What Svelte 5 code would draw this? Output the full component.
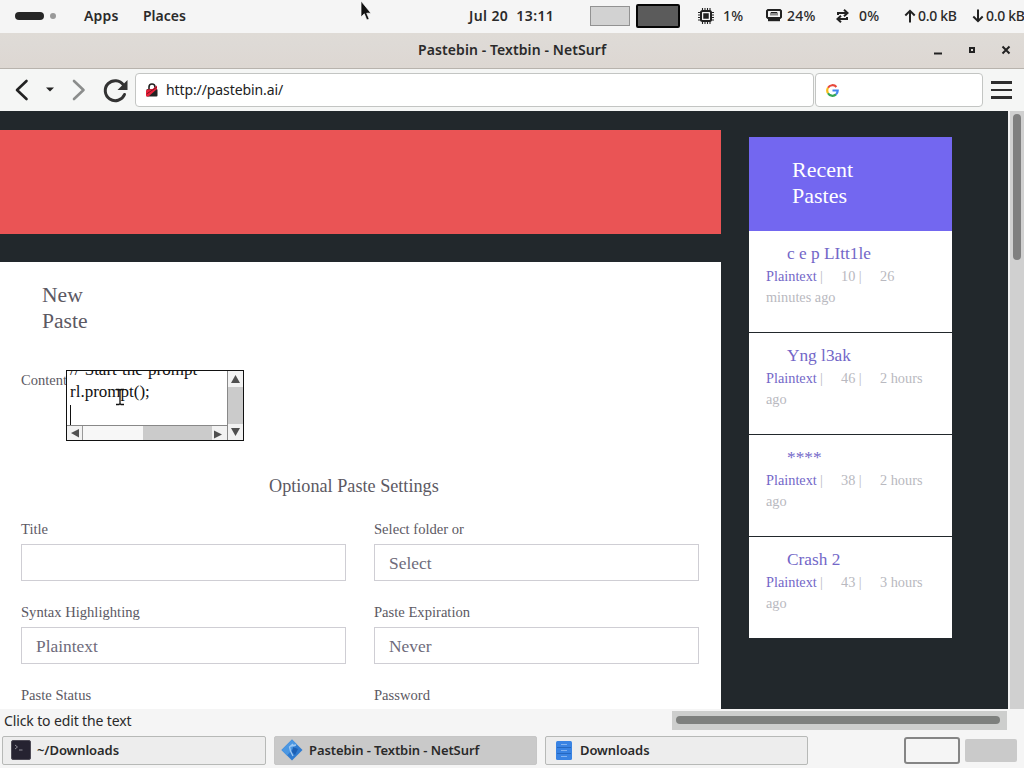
<script>
	const pastes = [
		{ title: 'c e p LItt1le', views: 10, age: '26', rest: 'minutes ago' },
		{ title: 'Yng l3ak', views: 46, age: '2 hours', rest: 'ago' },
		{ title: '****', views: 38, age: '2 hours', rest: 'ago' },
		{ title: 'Crash 2', views: 43, age: '3 hours', rest: 'ago' }
	];

	const fields = [
		{ label: 'Title', value: '' },
		{ label: 'Select folder or', value: 'Select' },
		{ label: 'Syntax Highlighting', value: 'Plaintext' },
		{ label: 'Paste Expiration', value: 'Never' },
		{ label: 'Paste Status', value: '' },
		{ label: 'Password', value: '' }
	];
</script>

<div class="desktop">
	<header class="panel">
		<span class="activity"></span>
		<span class="dot"></span>
		<span class="apps">Apps</span>
		<span class="places">Places</span>
		<span class="clock">Jul 20&nbsp; 13:11</span>
		<span class="pager"></span>
		<span class="pager active"></span>
		<svg class="cpu" width="16" height="16" viewBox="0 0 16 16" fill="none" stroke="#222">
			<rect x="3" y="3" width="10" height="10" rx="1.5" stroke-width="2" />
			<rect x="6" y="6" width="4" height="4" fill="#222" stroke-width="1.5" />
			<path d="M4.5 0v3M7 0v3M9.5 0v3M12 0v3M4.5 13v3M7 13v3M9.5 13v3M12 13v3M0 4.5h3M0 7h3M0 9.5h3M0 12h3M13 4.5h3M13 7h3M13 9.5h3M13 12h3" stroke-width="1.1" />
		</svg>
		<span class="stat one">1%</span>
		<svg class="ram" width="16" height="13" viewBox="0 0 16 13" fill="none" stroke="#222">
			<path d="M2 1h12l1 1v6l-1 1H2L1 8V2z" stroke-width="2" />
			<path d="M2 11h12" stroke-width="2.4" />
			<path d="M5 3.5v3M7 3.5v3M9 3.5v3M11 3.5v3M5 3.5h6" stroke-width="1" />
		</svg>
		<span class="stat two">24%</span>
		<svg class="swap" width="15" height="14" viewBox="0 0 15 14" fill="none" stroke="#222" stroke-width="2">
			<path d="M3 6V4h9M9 .8L12.500 4 9 7.200" />
			<path d="M12 8v2H3M6 6.800L2.500 10 6 13.200" />
		</svg>
		<span class="stat three">0%</span>
		<svg class="up" width="12" height="14" viewBox="0 0 12 14" fill="none" stroke="#222" stroke-width="2">
			<path d="M6 13.500V2M1.300 6.500L6 1.800l4.700 4.700" />
		</svg>
		<span class="stat rate">0.0 kB</span>
		<svg class="down" width="12" height="14" viewBox="0 0 12 14" fill="none" stroke="#222" stroke-width="2">
			<path d="M6 .5v11.500M1.300 7.500L6 12.200l4.700-4.700" />
		</svg>
		<span class="stat rate">0.0 kB</span>
	</header>

	<div class="titlebar">
		<span class="window-title">Pastebin - Textbin - NetSurf</span>
		<svg class="controls" width="80" height="12" viewBox="0 0 80 12" fill="none" stroke="#222" stroke-width="2">
			<path d="M1 9.500h8" />
			<rect x="37" y="4" width="4" height="4" />
			<path d="M69.500 2.500l7 7M76.500 2.500l-7 7" />
		</svg>
	</div>

	<nav class="toolbar">
		<svg class="nav-icons" width="135" height="42" viewBox="0 0 135 42" fill="none" stroke-linecap="round" stroke-linejoin="round">
			<path d="M26.500 12L17 21l9.500 9" stroke="#222" stroke-width="2.600" />
			<path d="M46 18.500h8l-4 4z" fill="#222" />
			<path d="M74 12l9.500 9L74 30" stroke="#8b8d8c" stroke-width="2.600" />
			<path d="M123.500 16A10 10 0 1 0 124.500 25.500" stroke="#333" stroke-width="3" />
			<path d="M127.500 11v10h-10z" fill="#333" />
		</svg>
		<div class="address">
			<svg width="12" height="14" viewBox="0 0 12 14">
				<path d="M3 6V4a3 3 0 0 1 6 0v3" fill="none" stroke="#222" stroke-width="1.600" />
				<rect x=".5" y="6" width="11" height="7.500" rx="1" fill="#222" />
				<path d="M0 8l1-1.500 5.500-.5L11 2.500V6l-8.500 7.500H.5L0 13z" fill="#e8213b" />
				<path d="M.5 11L11 4" stroke="#4a1018" stroke-width=".7" />
			</svg>
			<span>http://pastebin.ai/</span>
		</div>
		<div class="search">
			<svg width="13" height="13" viewBox="0 0 13 13" fill="none" stroke-width="2.200">
				<path d="M2 3.800A5.200 5.200 0 0 1 10.400 3" stroke="#e8483b" />
				<path d="M2 9.200A5.300 5.300 0 0 1 2 3.800" stroke="#f8bd17" />
				<path d="M10 10.400A5.200 5.200 0 0 1 2 9.200" stroke="#35a655" />
				<path d="M6.500 6.500h5.200c0 1.700-.5 3-1.700 3.900" stroke="#4385ef" />
			</svg>
		</div>
		<span class="menu"></span>
	</nav>

	<div class="browser">
		<div class="page">
			<main>
				<div class="banner"></div>
				<section class="card">
					<h1>New<br />Paste</h1>
					<div class="content-row">
						<span class="content-label">Content</span>
						<div class="textarea">
							<div class="lines">
								<span>// Start the prompt</span>
								<span>rl.prompt();</span>
								<i class="caret"></i>
							</div>
							<div class="vbar">
								<svg width="15" height="16" viewBox="0 0 15 16"><path d="M3 12L7.500 4 12 12z" /></svg>
								<svg width="15" height="16" viewBox="0 0 15 16"><path d="M3 4h9l-4.500 8z" /></svg>
							</div>
							<div class="hbar">
								<svg width="15" height="14" viewBox="0 0 15 14"><path d="M12 3v8.500L4 7z" /></svg>
								<i></i>
								<svg width="15" height="14" viewBox="0 0 15 14"><path d="M2 4.500v8l8-4z" /></svg>
							</div>
							<svg class="ibeam" width="10" height="18" viewBox="0 0 10 18">
								<path d="M1 1.500h3l1 1 1-1h3M5 2v14M1 16.500h3l1-1 1 1h3" fill="none" stroke="#111" stroke-width="1.300" />
							</svg>
						</div>
					</div>
					<h2>Optional Paste Settings</h2>
					<div class="fields">
						{#each fields as field}
							<label>
								<span>{field.label}</span>
								<div class="input">{field.value}</div>
							</label>
						{/each}
					</div>
				</section>
			</main>
			<aside>
				<h3>Recent<br />Pastes</h3>
				{#each pastes as paste}
					<article>
						<div class="paste-title">{paste.title}</div>
						<div class="meta">
							<a href="#plaintext">Plaintext</a><span class="views">|</span><span class="count">{paste.views} |</span><span>{paste.age}</span>
						</div>
						<div class="meta">{paste.rest}</div>
					</article>
				{/each}
			</aside>
		</div>
		<div class="scroll-y"><i></i></div>
	</div>

	<footer class="status">
		<span>Click to edit the text</span>
		<div class="scroll-x"><i></i></div>
	</footer>

	<div class="taskbar">
		<div class="task">
			<svg width="20" height="20" viewBox="0 0 20 20">
				<rect x=".5" y=".5" width="19" height="19" rx="1.500" fill="#262331" stroke="#4d4a55" />
				<path d="M4 5l2.500 2L4 9M8 10h3.500" fill="none" stroke="#8f8e98" />
			</svg>
			<span>~/Downloads</span>
		</div>
		<div class="task current">
			<svg width="22" height="22" viewBox="0 0 22 22">
				<path d="M11 .5L21.500 11 11 21.500.5 11z" fill="#2f7bd0" />
				<path d="M11 .5L16 5.500 6 16.500.5 11z" fill="#4b97e2" />
				<path d="M12 5L8.500 8l1 4 2.500 5M10 7l5-1" fill="none" stroke="#9cc7f2" stroke-width="1.300" />
				<path d="M12 8l5 2-3 6-3-3z" fill="#1c5fb3" />
			</svg>
			<span>Pastebin - Textbin - NetSurf</span>
		</div>
		<div class="task files">
			<svg width="16" height="19" viewBox="0 0 16 19">
				<rect width="16" height="19" rx="1.500" fill="#3983e3" />
				<path d="M1 6.500h14M1 12.500h14" stroke="#2568c0" />
				<path d="M5 3.500h6M5 9.500h6M5 15.500h6" stroke="#84b4f0" />
			</svg>
			<span>Downloads</span>
		</div>
		<span class="workspace selected"></span>
		<span class="workspace"></span>
	</div>

	<svg class="pointer" width="12" height="22" viewBox="0 0 12 22">
		<path d="M1 1v16l3.300-3.200 2.500 6.200 2.400-1-2.500-5.800H11z" fill="#111" stroke="#fff" stroke-width=".7" />
	</svg>
</div>

<style>
	:global(body) {
		overflow: hidden;
	}
	.desktop {
		position: relative;
		width: 1024px;
		height: 768px;
		overflow: hidden;
		background: #f5f5f5;
		color: #2a2a2a;
		font-family: 'Noto Sans', sans-serif;
		font-size: 14px;
		white-space: nowrap;
	}
	.desktop * {
		box-sizing: border-box;
	}
	svg {
		display: block;
		flex: none;
	}
	i {
		display: block;
	}

	/* top panel */
	.panel {
		display: flex;
		align-items: center;
		height: 33px;
		padding: 0 0 2px 15px;
		font-weight: 600;
		overflow: hidden;
	}
	.panel > * {
		flex: none;
	}
	.activity {
		width: 29px;
		height: 8px;
		border-radius: 4px;
		background: #262626;
	}
	.dot {
		width: 6px;
		height: 6px;
		margin-left: 6px;
		border-radius: 50%;
		background: #999;
	}
	.apps {
		width: 59px;
		margin-left: 28px;
		letter-spacing: 0.2px;
	}
	.places {
		width: 326px;
	}
	.clock {
		width: 121px;
		letter-spacing: 0.4px;
	}
	.pager {
		width: 40px;
		height: 20px;
		border: 1px solid #929292;
		background: #d2d2d2;
	}
	.pager.active {
		width: 44px;
		height: 24px;
		margin-left: 6px;
		border: 2px solid #050505;
		border-radius: 2px;
		background: #5b5b5b;
	}
	.cpu {
		margin-left: 18px;
	}
	.stat {
		font-weight: 500;
	}
	.one {
		width: 43px;
		margin-left: 9px;
		letter-spacing: 0.3px;
	}
	.two {
		width: 48px;
		margin-left: 5px;
		letter-spacing: 0.3px;
	}
	.three {
		width: 45px;
		margin-left: 9px;
		letter-spacing: 0.3px;
	}
	.rate {
		width: 54px;
		margin-left: 2px;
		letter-spacing: -0.3px;
	}

	/* window chrome */
	.titlebar {
		display: flex;
		align-items: center;
		height: 36px;
		padding: 0 0 2px 418px;
		border-bottom: 1px solid #b8b3ad;
		background: linear-gradient(#dfdbd6, #dedad6 30%, #ddd7d2);
		font-weight: 600;
	}
	.window-title {
		width: 515px;
		letter-spacing: 0.09px;
	}
	.toolbar {
		display: flex;
		align-items: center;
		height: 42px;
		background: #f5f6f5;
	}
	.address,
	.search {
		display: flex;
		align-items: center;
		height: 34px;
		border: 1px solid #c3c5c3;
		border-radius: 4px;
		background: #fff;
	}
	.address {
		gap: 8px;
		width: 679px;
		padding: 0 0 1px 10px;
		color: #222;
		letter-spacing: -0.1px;
	}
	.search {
		width: 168px;
		margin-left: 1px;
		padding-left: 10px;
	}
	.menu {
		width: 21px;
		height: 18px;
		margin: 0 0 1px 8px;
		border-top: 3px solid #2d2d2d;
		border-bottom: 3px solid #2d2d2d;
		background: linear-gradient(#2d2d2d, #2d2d2d) 0 5px / 100% 2px no-repeat;
	}

	/* web page */
	.browser {
		display: flex;
		height: 598px;
	}
	.page {
		display: flex;
		align-items: flex-start;
		width: 1008px;
		height: 598px;
		overflow: hidden;
		background: #22282c;
		font-family: 'Liberation Serif', serif;
	}
	main {
		width: 721px;
		padding-top: 19px;
	}
	.banner {
		height: 104px;
		margin-bottom: 28px;
		background: #ea5455;
	}
	.card {
		height: 447px;
		padding: 20px 22px 0 21px;
		overflow: hidden;
		background: #fff;
		color: #5c5963;
	}
	h1,
	h2,
	h3 {
		margin: 0;
		font-weight: normal;
	}
	h1 {
		padding-left: 21px;
		font-size: 21.6px;
		line-height: 26px;
	}
	.content-row {
		display: flex;
		height: 71px;
		margin-top: 36px;
	}
	.content-label {
		width: 45px;
		font-size: 14.5px;
		line-height: 20px;
	}
	.textarea {
		position: relative;
		display: grid;
		grid-template: 54px 15px / 160px 16px;
		width: 178px;
		height: 71px;
		border: 1px solid #111;
		background: #fff;
	}
	.lines {
		display: flex;
		flex-direction: column;
		overflow: hidden;
		padding-left: 3px;
		color: #111;
		font-size: 17px;
	}
	.lines span {
		flex: none;
		height: 22px;
		line-height: 22px;
		word-spacing: 1px;
	}
	.lines span:first-child {
		margin-top: -12px;
	}
	.caret {
		flex: none;
		width: 1px;
		height: 22px;
		margin-top: 2px;
		background: #111;
	}
	.vbar {
		display: flex;
		grid-row: 1 / 3;
		grid-column: 2;
		flex-direction: column;
		justify-content: space-between;
		border-left: 1px solid #888;
		background: #cbcbcb;
	}
	.hbar {
		display: flex;
		grid-row: 2;
		grid-column: 1;
		border-top: 1px solid #888;
		background: #cbcbcb;
	}
	.vbar svg,
	.hbar svg {
		background: #f2f2f2;
		fill: #505050;
	}
	.hbar i {
		width: 61px;
		margin-right: 69px;
		border-left: 1px solid #999;
		background: #f7f7f7;
	}
	.ibeam {
		position: absolute;
		left: 48px;
		top: 17px;
	}
	h2 {
		margin: 32px 0 20px 248px;
		font-size: 18.2px;
		line-height: 26px;
	}
	.fields {
		display: grid;
		grid-template-columns: 325px 325px;
		column-gap: 28px;
	}
	label {
		display: block;
		height: 83px;
		font-size: 14.6px;
		line-height: 20px;
	}
	label span {
		display: block;
	}
	.input {
		height: 37px;
		margin-top: 5px;
		padding-left: 14px;
		border: 1px solid #cfced4;
		color: #6e6b7b;
		font-size: 17.4px;
		line-height: 37px;
	}

	aside {
		width: 203px;
		margin: 26px 0 0 28px;
	}
	h3 {
		height: 94px;
		padding: 20px 0 0 43px;
		background: #7367f0;
		color: #fff;
		font-size: 22px;
		line-height: 26px;
	}
	article {
		height: 101px;
		padding: 11px 0 0 17px;
		background: #fff;
	}
	article + article {
		margin-top: 1px;
	}
	.paste-title {
		padding-left: 21px;
		color: #7367c8;
		font-size: 17.3px;
		line-height: 24px;
	}
	.meta {
		display: flex;
		color: #b9b9c0;
		font-size: 14.3px;
		line-height: 21px;
	}
	.meta a {
		width: 54px;
		color: #7367c8;
		text-decoration: none;
	}
	.views {
		width: 21px;
	}
	.count {
		width: 39px;
	}
	.scroll-y {
		width: 16px;
		padding: 3px 3px 0;
		border-left: 2px solid #f2f2f2;
		background: #d0d0d0;
	}
	.scroll-y i {
		width: 8px;
		height: 146px;
		border-radius: 4px;
		background: #7f7f7f;
	}

	/* status line and task list */
	.status {
		display: flex;
		justify-content: space-between;
		height: 23px;
		padding: 2px 17px 0 4px;
		letter-spacing: -0.13px;
		line-height: 19px;
	}
	.scroll-x {
		width: 335px;
		height: 19px;
		padding: 5px 0 0 4px;
		background: #cdcecd;
	}
	.scroll-x i {
		width: 324px;
		height: 8px;
		border-radius: 4px;
		background: #7e807e;
	}
	.taskbar {
		display: flex;
		align-items: center;
		height: 36px;
		padding: 0 0 0 2px;
		font-size: 13px;
		font-weight: 600;
		letter-spacing: -0.08px;
	}
	.task {
		display: flex;
		align-items: center;
		gap: 6px;
		width: 264px;
		height: 29px;
		margin-right: 8px;
		padding: 0 0 0 8px;
		border: 1px solid #b7b9b7;
		border-radius: 2px;
		background: #ededed;
	}
	.current {
		width: 263px;
		padding-left: 6px;
		border-color: #c6c6c6;
		background: #c9c9c9;
	}
	.files {
		width: 263px;
		padding-left: 10px;
		gap: 8px;
	}
	.workspace {
		width: 52px;
		height: 23px;
		border-radius: 2px;
		background: #cacaca;
	}
	.selected {
		width: 56px;
		height: 27px;
		margin: 0 5px 0 88px;
		border: 2px solid #858585;
		border-radius: 3px;
		background: #f5f5f5;
	}
	.pointer {
		position: absolute;
		left: 360px;
		top: 0;
	}
</style>
